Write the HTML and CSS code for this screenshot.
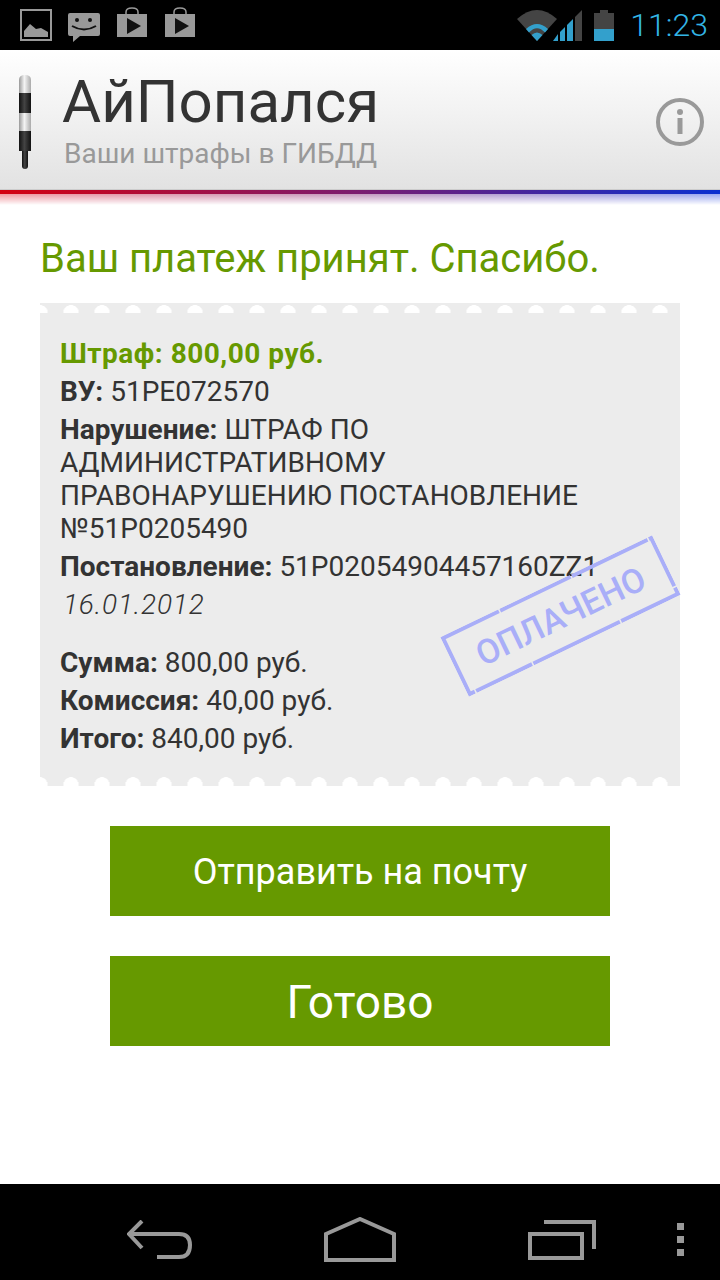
FILE: index.html
```html
<!DOCTYPE html>
<html lang="ru">
  <head>
    <meta charset="UTF-8" />
    <meta name="viewport" content="width=device-width, initial-scale=1.0" />
    <title>АйПопался</title>
    <link rel="stylesheet" href="styles.css">
  </head>
  <body>
    <div class="page">
      <div class="status-bar">
        <svg class="st-icon" width="32" height="32" viewBox="0 0 32 32">
          <rect x="1" y="1" width="30" height="30" fill="none" stroke="#999" stroke-width="2"/>
          <path d="M4 28V22L10 15L16 20L21 19L28 23V28Z" fill="#999"/>
        </svg>
        <svg class="st-icon st-chat" width="32" height="32" viewBox="0 0 32 32">
          <path d="M2 1H30Q32 1 32 3V22Q32 24 30 24H12L5 30V24H2Q0 24 0 22V3Q0 1 2 1Z" fill="#999"/>
          <circle cx="9" cy="8" r="2" fill="#111"/>
          <circle cx="22" cy="8" r="2" fill="#111"/>
          <path d="M4 14Q16 21 28 14" fill="none" stroke="#111" stroke-width="2"/>
        </svg>
        <svg class="st-icon st-bag" width="32" height="32" viewBox="0 0 32 32">
          <path d="M10 8V5Q10 1 16 1Q22 1 22 5V8" fill="none" stroke="#999" stroke-width="1.5"/>
          <path d="M1 7H31V30H1Z" fill="#999"/>
          <path d="M11 11L25 19L11 27Z" fill="#111"/>
        </svg>
        <svg class="st-icon st-bag" width="32" height="32" viewBox="0 0 32 32">
          <path d="M10 8V5Q10 1 16 1Q22 1 22 5V8" fill="none" stroke="#999" stroke-width="1.5"/>
          <path d="M1 7H31V30H1Z" fill="#999"/>
          <path d="M11 11L25 19L11 27Z" fill="#111"/>
        </svg>
        <div class="status-right">
          <svg class="wifi" width="40" height="31" viewBox="0 0 40 31">
            <path d="M0 9Q20 -9 40 9L20 31Z" fill="#444"/>
            <path d="M9 19Q20 9 31 19L28 22.5Q20 14 12 22.500Z" fill="#33a0cc"/>
            <path d="M14.500 25Q20 20 25.500 25L20 31Z" fill="#33a0cc"/>
          </svg>
          <svg class="signal" width="29" height="31" viewBox="0 0 29 31">
            <path d="M29 0V31H22V7Z" fill="#444"/>
            <path d="M20 9V31H14V15Z" fill="#33a0cc"/>
            <path d="M12 17V31H7V22Z" fill="#33a0cc"/>
            <path d="M5 24V31H0Z" fill="#33a0cc"/>
          </svg>
          <svg class="battery" width="20" height="31" viewBox="0 0 20 31">
            <path d="M6 0H14V3H20V19H0V3H6Z" fill="#444"/>
            <rect y="19" width="20" height="12" fill="#33a0cc"/>
          </svg>
          <span class="clock">11:23</span>
        </div>
      </div>

      <div class="app-header">
        <svg class="pole" width="12" height="94" viewBox="0 0 12 94">
          <defs>
            <linearGradient id="light-seg">
              <stop offset="0" stop-color="#999"/>
              <stop offset=".45" stop-color="#f4f4f4"/>
              <stop offset="1" stop-color="#aaa"/>
            </linearGradient>
            <linearGradient id="dark-seg">
              <stop offset="0" stop-color="#111"/>
              <stop offset=".45" stop-color="#444"/>
              <stop offset="1" stop-color="#111"/>
            </linearGradient>
          </defs>
          <path d="M0 18V5Q0 0 6 0Q12 0 12 5V18Z" fill="url(#light-seg)"/>
          <rect y="18" width="12" height="20" fill="url(#dark-seg)"/>
          <rect y="38" width="12" height="18" fill="url(#light-seg)"/>
          <rect y="56" width="12" height="20" fill="url(#dark-seg)"/>
          <path d="M3 76H9V91Q9 94 6 94Q3 94 3 91Z" fill="url(#dark-seg)"/>
        </svg>
        <div class="app-titles">
          <div class="app-name">АйПопался</div>
          <div class="app-sub">Ваши штрафы в ГИБДД</div>
        </div>
        <svg class="info-btn" width="48" height="48" viewBox="0 0 48 48">
          <circle cx="24" cy="24" r="22" fill="none" stroke="#999" stroke-width="4"/>
          <circle cx="24" cy="14" r="3" fill="#999"/>
          <rect x="21.500" y="20" width="5" height="16" fill="#999"/>
        </svg>
      </div>
      <div class="flag-line"></div>
      <div class="flag-fade"></div>

      <div class="content">
        <h1 class="result-title">Ваш платеж принят. Спасибо.</h1>

        <div class="ticket">
          <p class="row fine"><b>Штраф: 800,00 руб.</b></p>
          <p class="row"><b>ВУ:</b> 51РЕ072570</p>
          <p class="row"><b>Нарушение:</b> ШТРАФ ПО<br>АДМИНИСТРАТИВНОМУ<br>ПРАВОНАРУШЕНИЮ ПОСТАНОВЛЕНИЕ<br>№51Р0205490</p>
          <p class="row"><b>Постановление:</b> 51Р02054904457160ZZ1</p>
          <p class="row date">16.01.2012</p>
          <p class="row sum"><b>Сумма:</b> 800,00 руб.</p>
          <p class="row"><b>Комиссия:</b> 40,00 руб.</p>
          <p class="row"><b>Итого:</b> 840,00 руб.</p>
          <div class="stamp">
            <svg class="stamp-frame" width="235" height="66" viewBox="0 0 235 66">
              <rect x="2" y="2" width="231" height="62" fill="none" stroke="#a9aef8" stroke-width="4" stroke-dasharray="62 1.500 78 1.500 84 1.500 56 1.500 70 1.500 96 1.500"/>
            </svg>
            <span class="stamp-text">ОПЛАЧЕНО</span>
          </div>
        </div>

        <div class="actions">
          <button class="action-btn">Отправить на почту</button>
          <button class="action-btn big">Готово</button>
        </div>
      </div>

      <div class="nav-bar">
        <svg class="nav-back" width="66" height="40" viewBox="0 0 66 40">
          <path d="M15 1L2 14L15 28M2 14H52Q63 14 63 25Q63 37 52 37H30" fill="none" stroke="#999" stroke-width="4"/>
        </svg>
        <svg class="nav-home" width="72" height="45" viewBox="0 0 72 45">
          <path d="M2 43V17L36 2L70 17V43Z" fill="none" stroke="#999" stroke-width="4"/>
        </svg>
        <svg class="nav-recent" width="68" height="40" viewBox="0 0 68 40">
          <path d="M16 2H66V29" fill="none" stroke="#999" stroke-width="4"/>
          <rect x="2" y="14" width="52" height="24" fill="none" stroke="#999" stroke-width="4"/>
        </svg>
        <div class="nav-menu"><i></i><i></i><i></i></div>
      </div>
    </div>
  </body>
</html>
```

FILE: styles.css
```css
html,
body {
  margin: 0;
  padding: 0;
}
body {
  font-family: Roboto, "Noto Sans", sans-serif;
  background-color: #ffffff;
  color: #333333;
}
.page {
  width: 720px;
  height: 1280px;
  display: flex;
  flex-direction: column;
  overflow: hidden;
}

/* status bar */
.status-bar {
  height: 50px;
  flex: none;
  background: #000000;
  display: flex;
  align-items: center;
  padding: 0 12px 0 20px;
  box-sizing: border-box;
}
.st-icon {
  margin-right: 16px;
}
.st-chat {
  margin-top: 6px;
}
.st-bag {
  margin-top: -5px;
}
.status-right {
  margin-left: auto;
  display: flex;
  align-items: center;
}
.wifi {
  margin-right: -4px;
}
.battery {
  margin-left: 12px;
}
.clock {
  margin-left: 16px;
  color: #33b5e5;
  font-size: 32px;
  font-weight: 300;
  line-height: 50px;
}

/* header */
.app-header {
  height: 140px;
  flex: none;
  box-sizing: border-box;
  display: flex;
  align-items: center;
  padding: 0 16px 0 19px;
  background: linear-gradient(#ffffff, #e2e2e2);
  border-bottom: 1px solid #cccccc;
}
.pole {
  flex: none;
  margin-top: 4px;
}
.app-titles {
  margin-left: 31px;
}
.app-name {
  font-size: 60px;
  line-height: 68px;
  color: #333333;
}
.app-sub {
  font-size: 28px;
  line-height: 34px;
  margin-left: 2px;
  margin-top: 1px;
  color: #999999;
}
.info-btn {
  margin-left: auto;
  margin-top: 4px;
}
.flag-line {
  height: 4px;
  flex: none;
  background: linear-gradient(90deg, #d40010, #7a1c70 50%, #0a2fd0);
}
.flag-fade {
  height: 11px;
  flex: none;
  background: linear-gradient(90deg, #e02030, #7a1c70 50%, #2040e0);
  -webkit-mask-image: linear-gradient(rgba(0, 0, 0, 0.45), transparent);
  mask-image: linear-gradient(rgba(0, 0, 0, 0.45), transparent);
}

/* content */
.content {
  flex: 1;
  padding: 0 40px;
}
.result-title {
  margin: 30px 0 0;
  font-size: 40px;
  line-height: 48px;
  font-weight: 400;
  color: #669900;
}
.ticket {
  position: relative;
  margin-top: 20px;
  height: 483px;
  box-sizing: border-box;
  padding: 34px 20px 0;
  background:
    radial-gradient(ellipse 8px 8px at 50% 100%, #ffffff 96%, transparent) -15.500px 2px / 31px 8px repeat-x,
    radial-gradient(ellipse 8px 9px at 50% 100%, #ffffff 96%, transparent) -15.500px 100% / 31px 9px repeat-x,
    #ececec;
}
.row {
  margin: 0 0 5px;
  font-size: 28px;
  line-height: 33px;
  color: #333333;
}
.fine {
  color: #669900;
  letter-spacing: 0.5px;
}
.date {
  font-style: italic;
  font-weight: 300;
  margin-left: 3px;
  letter-spacing: 0.8px;
}
.sum {
  margin-top: 25px;
}
.stamp {
  position: absolute;
  left: 403px;
  top: 280px;
  width: 235px;
  height: 66px;
  transform: rotate(-25.700deg);
  display: flex;
  align-items: center;
  justify-content: center;
}
.stamp-frame {
  position: absolute;
  left: 0;
  top: 0;
}
.stamp-text {
  color: #a9aef8;
  font-size: 34px;
  font-weight: 500;
}
.actions {
  display: flex;
  flex-direction: column;
  align-items: center;
  gap: 40px;
  margin-top: 40px;
}
.action-btn {
  width: 500px;
  height: 90px;
  border: none;
  background: #669900;
  color: #ffffff;
  font-family: inherit;
  font-size: 36px;
  padding: 2px 0 0;
}
.action-btn.big {
  font-size: 46px;
}

/* navigation */
.nav-bar {
  height: 96px;
  flex: none;
  background: #000000;
  display: flex;
  align-items: center;
  padding: 15px 0 0 127px;
  box-sizing: border-box;
}
.nav-back {
  margin-top: 1px;
}
.nav-home {
  margin-left: 131px;
}
.nav-recent {
  margin-left: 132px;
  margin-top: 1px;
}
.nav-menu {
  margin-left: 81px;
  display: flex;
  flex-direction: column;
  gap: 6px;
}
.nav-menu i {
  display: block;
  width: 7px;
  height: 7px;
  background: #999999;
}
```
